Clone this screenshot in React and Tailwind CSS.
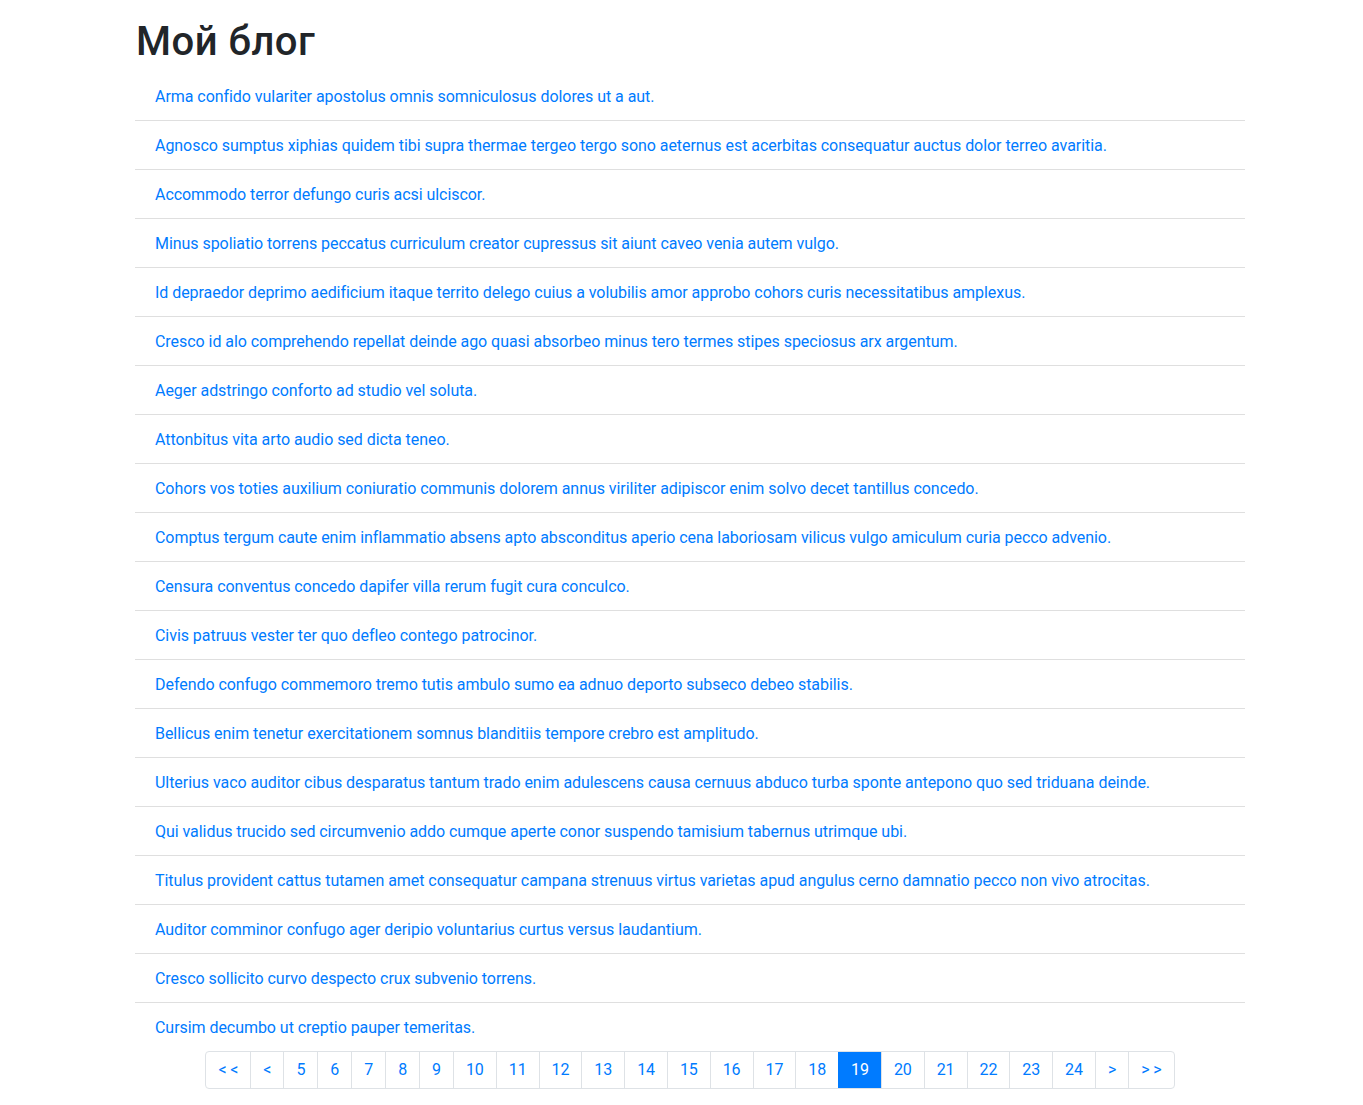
const posts = [
  "Arma confido vulariter apostolus omnis somniculosus dolores ut a aut.",
  "Agnosco sumptus xiphias quidem tibi supra thermae tergeo tergo sono aeternus est acerbitas consequatur auctus dolor terreo avaritia.",
  "Accommodo terror defungo curis acsi ulciscor.",
  "Minus spoliatio torrens peccatus curriculum creator cupressus sit aiunt caveo venia autem vulgo.",
  "Id depraedor deprimo aedificium itaque territo delego cuius a volubilis amor approbo cohors curis necessitatibus amplexus.",
  "Cresco id alo comprehendo repellat deinde ago quasi absorbeo minus tero termes stipes speciosus arx argentum.",
  "Aeger adstringo conforto ad studio vel soluta.",
  "Attonbitus vita arto audio sed dicta teneo.",
  "Cohors vos toties auxilium coniuratio communis dolorem annus viriliter adipiscor enim solvo decet tantillus concedo.",
  "Comptus tergum caute enim inflammatio absens apto absconditus aperio cena laboriosam vilicus vulgo amiculum curia pecco advenio.",
  "Censura conventus concedo dapifer villa rerum fugit cura conculco.",
  "Civis patruus vester ter quo defleo contego patrocinor.",
  "Defendo confugo commemoro tremo tutis ambulo sumo ea adnuo deporto subseco debeo stabilis.",
  "Bellicus enim tenetur exercitationem somnus blanditiis tempore crebro est amplitudo.",
  "Ulterius vaco auditor cibus desparatus tantum trado enim adulescens causa cernuus abduco turba sponte antepono quo sed triduana deinde.",
  "Qui validus trucido sed circumvenio addo cumque aperte conor suspendo tamisium tabernus utrimque ubi.",
  "Titulus provident cattus tutamen amet consequatur campana strenuus virtus varietas apud angulus cerno damnatio pecco non vivo atrocitas.",
  "Auditor comminor confugo ager deripio voluntarius curtus versus laudantium.",
  "Cresco sollicito curvo despecto crux subvenio torrens.",
  "Cursim decumbo ut creptio pauper temeritas.",
];

const pages = ["< <", "<", 5, 6, 7, 8, 9, 10, 11, 12, 13, 14, 15, 16, 17, 18, 19, 20, 21, 22, 23, 24, ">", "> >"];

export default function App() {
  return (
    <div className="min-h-screen bg-white font-['Roboto',sans-serif] text-[#212529]">
      <div className="ml-[135px] w-[1110px] pt-[18px]">
        <h1 className="mb-1.5 pl-px text-[40px] font-medium leading-[48px] tracking-[0.5px]">Мой блог</h1>
        <ul className="flex flex-col tracking-[-0.05px]">
          {posts.map((title, i) => (
            <li
              key={i}
              className="border-b border-[#dfdfdf] px-5 pt-[13px] pb-[11px] text-base leading-6 last:border-b-0"
            >
              <a href="#" className="text-[#007bff]">
                {title}
              </a>
            </li>
          ))}
        </ul>
        <nav className="flex justify-center">
          <ul className="flex rounded border border-[#dee2e6]">
            {pages.map((p, i) => {
              const active = p === 19;
              return (
                <li
                  key={i}
                  className={
                    "border-l px-3 py-2 text-base leading-5 tracking-[-0.1px] first:border-l-0 " +
                    (active
                      ? "border-[#007bff] bg-[#007bff] text-white"
                      : "border-[#dee2e6] text-[#007bff]")
                  }
                >
                  {p}
                </li>
              );
            })}
          </ul>
        </nav>
      </div>
    </div>
  );
}
